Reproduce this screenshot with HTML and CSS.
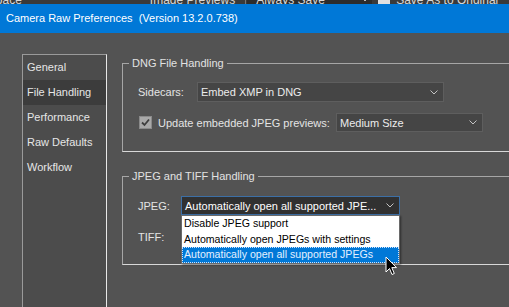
FILE: index.html
```html
<!DOCTYPE html>
<html>
<head>
<meta charset="utf-8">
<link rel="stylesheet" href="styles.css">
</head>
<body>
<div class="bgstrip">
  <span class="bg-ws">Workspace</span>
  <span class="bg-prev">Image Previews</span>
  <span class="bg-sep"></span>
  <span class="bg-drop"><span>Always Save</span><svg class="bg-chev" width="8" height="5" viewBox="0 0 8 5"><polyline points="0.5,0.5 4,4 7.5,0.5" fill="none" stroke="#bbb" stroke-width="1"/></svg></span>
  <span class="bg-check"></span>
  <span class="bg-save">Save As to Original</span>
</div>
<div class="titlebar">Camera Raw Preferences&nbsp; (Version 13.2.0.738)</div>
<div class="dialog">
  <ul class="sidebar">
    <li>General</li>
    <li class="selected">File Handling</li>
    <li>Performance</li>
    <li>Raw Defaults</li>
    <li>Workflow</li>
  </ul>
  <div class="main">
    <fieldset class="group">
      <legend>DNG File Handling</legend>
      <div class="row row-first">
        <span class="label label-sidecars">Sidecars:</span>
        <div class="select select-sidecars"><span>Embed XMP in DNG</span><svg class="chev" width="8" height="5" viewBox="0 0 8 5"><polyline points="0.5,0.5 4,4 7.5,0.5" fill="none" stroke="#c4c4c4" stroke-width="1"/></svg></div>
      </div>
      <div class="row row-second">
        <span class="checkbox"><svg width="11" height="11" viewBox="0 0 11 11"><polyline points="2,5.5 4.5,8 9,2.5" fill="none" stroke="#3e3e3e" stroke-width="1.8"/></svg></span>
        <span class="label label-update">Update embedded JPEG previews:</span>
        <div class="select select-size"><span>Medium Size</span><svg class="chev" width="8" height="5" viewBox="0 0 8 5"><polyline points="0.5,0.5 4,4 7.5,0.5" fill="none" stroke="#c4c4c4" stroke-width="1"/></svg></div>
      </div>
    </fieldset>
    <fieldset class="group group-jpeg">
      <legend>JPEG and TIFF Handling</legend>
      <div class="row row-jpeg">
        <span class="label label-short">JPEG:</span>
        <div class="select select-jpeg focused"><span>Automatically open all supported JPE...</span><svg class="chev" width="8" height="5" viewBox="0 0 8 5"><polyline points="0.5,0.5 4,4 7.5,0.5" fill="none" stroke="#c4c4c4" stroke-width="1"/></svg>
          <ul class="dropdown">
            <li>Disable JPEG support</li>
            <li>Automatically open JPEGs with settings</li>
            <li class="hl">Automatically open all supported JPEGs</li>
            <svg class="cursor" width="13" height="20" viewBox="0 0 13 20"><path d="M1 1 L1 16 L4.5 12.5 L7 18.5 L9.3 17.5 L6.8 11.6 L11.5 11.6 Z" fill="#000" stroke="#fff" stroke-width="1" stroke-linejoin="round"/></svg>
          </ul>
        </div>
      </div>
      <div class="row row-tiff">
        <span class="label label-short">TIFF:</span>
        <div class="select select-tiff"></div>
      </div>
    </fieldset>
  </div>
</div>
</body>
</html>
```
FILE: styles.css
```css
* { box-sizing: border-box; }
html, body {
  margin: 0;
  padding: 0;
  width: 509px;
  height: 307px;
  overflow: hidden;
  background: #535353;
  font-family: "Liberation Sans", Arial, sans-serif;
  font-size: 11px;
  color: #e4e4e4;
}

.bgstrip {
  height: 4px;
  overflow: hidden;
  background: #3a3a3a;
  display: flex;
  align-items: flex-end;
  font-size: 12px;
  line-height: 12px;
  color: #d8d8d8;
  white-space: nowrap;
}
.bgstrip > span { flex: none; margin-bottom: -2px; }
.bg-ws { margin-left: -38px; }
.bg-prev { margin-left: 128px; }
.bg-sep { width: 1px; height: 12px; background: #777; margin-left: 10px; }
.bg-drop {
  display: flex;
  align-items: flex-end;
  width: 125px;
  height: 12px;
  margin-left: 1px;
  padding-left: 9px;
  background: #2c2c2c;
}
.bg-chev { margin-left: 36px; margin-bottom: 4px; }
.bg-check { width: 12px; height: 12px; background: #e0e0e0; margin-left: 6px; }
.bg-save { margin-left: 6px; }

.titlebar {
  height: 29px;
  line-height: 29px;
  background: #0078d7;
  color: #fff;
  padding-left: 6px;
  white-space: pre;
}

.dialog {
  display: flex;
  align-items: flex-start;
  padding-top: 21px;
  height: 274px;
}

.sidebar {
  list-style: none;
  margin: 0 0 0 22px;
  padding: 0;
  width: 85px;
  height: 260px;
  flex: none;
  background: #4c4c4c;
  border-top: 1px solid #9a9a9a;
  border-left: 1px solid #9a9a9a;
  border-right: 1px solid #e8e8e8;
}
.sidebar li {
  height: 25px;
  line-height: 25px;
  padding-left: 4px;
  color: #e6e6e6;
  white-space: nowrap;
}
.sidebar li.selected { background: #3c3c3c; }

.main {
  margin-left: 15px;
  flex: none;
  width: 430px;
}

.group {
  margin: 2px 0 0 0;
  padding: 0 0 19px 15px;
  border: 1px solid #a6a6a6;
  border-right: none;
  border-bottom-color: #d8d8d8;
  width: 430px;
  min-width: 0;
}
.group legend {
  margin-left: -9px;
  padding: 0 3px;
  line-height: 14px;
  color: #e2e2e2;
}
.group-jpeg { margin-top: 17px; padding-bottom: 18px; }

.row {
  display: flex;
  align-items: center;
  white-space: nowrap;
}
.row-first { margin-top: 12px; }
.row-second { margin-top: 11px; }
.row-jpeg { margin-top: 13px; }
.row-tiff { margin-top: 12px; }

.label { flex: none; }
.label-sidecars { width: 59px; }
.label-update { margin-left: 6px; width: 178px; }
.label-short { width: 43px; }

.checkbox {
  width: 13px;
  height: 13px;
  margin-left: 1px;
  background: #a9a9a9;
  border: 1px solid #8a8a8a;
  display: flex;
  align-items: center;
  justify-content: center;
  flex: none;
}

.select {
  position: relative;
  display: flex;
  align-items: center;
  justify-content: space-between;
  height: 20px;
  padding: 0 5px 0 3px;
  background: #454545;
  border: 1px solid #5e5e5e;
  color: #ececec;
  flex: none;
}
.select-sidecars { width: 247px; }
.select-size { width: 147px; height: 19px; }
.select-jpeg {
  width: 219px;
  height: 19px;
  background: #313131;
  border-color: #3c6fa6;
  color: #fff;
}
.select-tiff { width: 219px; height: 19px; }
.chev { flex: none; }

.dropdown {
  position: absolute;
  left: -1px;
  top: 18px;
  width: 219px;
  margin: 0;
  padding: 0;
  list-style: none;
  background: #fff;
  border: 1px solid #6a6a6a;
  box-shadow: 1px 1px 2px rgba(0, 0, 0, 0.45);
  z-index: 2;
}
.dropdown li {
  height: 15.5px;
  line-height: 15px;
  padding-left: 2px;
  color: #000;
  font-size: 10.6px;
  white-space: nowrap;
}
.dropdown li.hl {
  background: #0078d7;
  color: #e4f0ff;
  outline: 1px dotted #cfe4ff;
  outline-offset: -1px;
}
.cursor {
  position: absolute;
  left: 203px;
  top: 40px;
}
```
